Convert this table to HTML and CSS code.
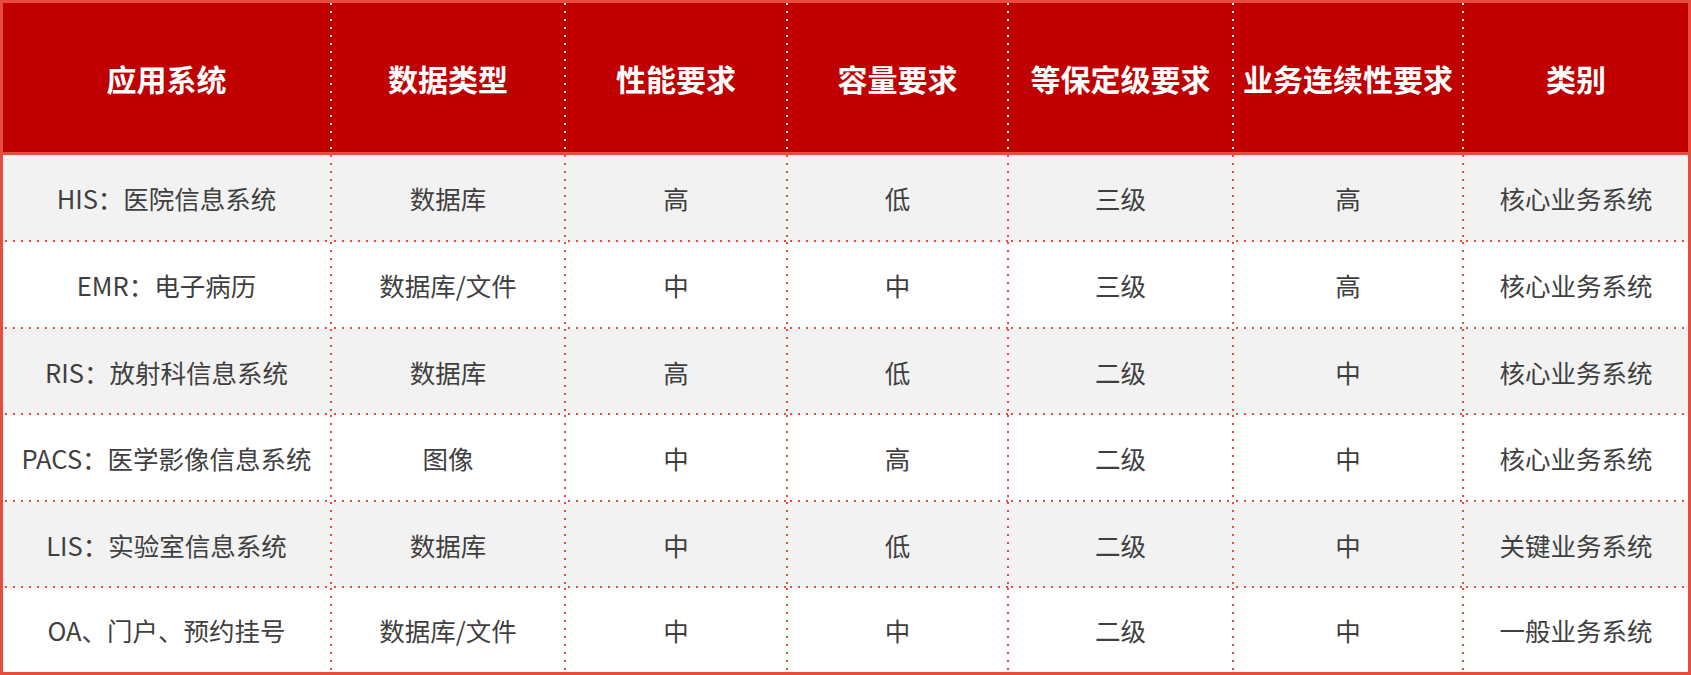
FILE: index.html
```html
<!DOCTYPE html>
<html lang="zh-CN">
<head>
<meta charset="utf-8">
<title>应用系统分类</title>
<link rel="stylesheet" href="styles.css">
</head>
<body>
<div class="table">
  <div class="row head">
    <div class="cell">应用系统</div>
    <div class="cell">数据类型</div>
    <div class="cell">性能要求</div>
    <div class="cell">容量要求</div>
    <div class="cell">等保定级要求</div>
    <div class="cell">业务连续性要求</div>
    <div class="cell">类别</div>
  </div>
  <div class="row body alt r87">
    <div class="cell">HIS：医院信息系统</div>
    <div class="cell">数据库</div>
    <div class="cell">高</div>
    <div class="cell">低</div>
    <div class="cell">三级</div>
    <div class="cell">高</div>
    <div class="cell">核心业务系统</div>
  </div>
  <div class="row body r87">
    <div class="cell">EMR：电子病历</div>
    <div class="cell">数据库/文件</div>
    <div class="cell">中</div>
    <div class="cell">中</div>
    <div class="cell">三级</div>
    <div class="cell">高</div>
    <div class="cell">核心业务系统</div>
  </div>
  <div class="row body alt r86">
    <div class="cell">RIS：放射科信息系统</div>
    <div class="cell">数据库</div>
    <div class="cell">高</div>
    <div class="cell">低</div>
    <div class="cell">二级</div>
    <div class="cell">中</div>
    <div class="cell">核心业务系统</div>
  </div>
  <div class="row body r87">
    <div class="cell">PACS：医学影像信息系统</div>
    <div class="cell">图像</div>
    <div class="cell">中</div>
    <div class="cell">高</div>
    <div class="cell">二级</div>
    <div class="cell">中</div>
    <div class="cell">核心业务系统</div>
  </div>
  <div class="row body alt r86">
    <div class="cell">LIS：实验室信息系统</div>
    <div class="cell">数据库</div>
    <div class="cell">中</div>
    <div class="cell">低</div>
    <div class="cell">二级</div>
    <div class="cell">中</div>
    <div class="cell">关键业务系统</div>
  </div>
  <div class="row body last r84">
    <div class="cell">OA、门户、预约挂号</div>
    <div class="cell">数据库/文件</div>
    <div class="cell">中</div>
    <div class="cell">中</div>
    <div class="cell">二级</div>
    <div class="cell">中</div>
    <div class="cell">一般业务系统</div>
  </div>
</div>
</body>
</html>
```

FILE: styles.css
```css
html, body {
  margin: 0;
  padding: 0;
  background: #ffffff;
  overflow: hidden;
}

.table {
  box-sizing: border-box;
  width: 1691px;
  height: 675px;
  border: 3px solid #e84c3d;
  display: flex;
  flex-direction: column;
  overflow: hidden;
  font-family: "Noto Sans CJK SC", "Noto Sans", sans-serif;
}

.row {
  box-sizing: border-box;
  display: grid;
  grid-template-columns: 329px 234px 222px 221px 225px 230px 224px;
  grid-template-rows: 100%;
  flex: none;
  overflow: hidden;
}

.cell {
  box-sizing: border-box;
  display: flex;
  align-items: center;
  justify-content: center;
  white-space: nowrap;
  padding-right: 2px;
  min-height: 0;
  line-height: 1.2;
}

.cell:last-child {
  padding-right: 0;
}

/* header */
.head {
  height: 152px;
  background: #c00000;
  border-bottom: 3px solid #e84c3d;
}

.head .cell {
  color: #ffffff;
  font-size: 30px;
  font-weight: 700;
  background-image: linear-gradient(to bottom, #ffffff 2px, transparent 2px);
  background-size: 2px 8px;
  background-repeat: repeat-y;
  background-position: right 0 top 0;
}

.head .cell:last-child {
  background-image: none;
}

/* body rows */
.body {
  background: #ffffff;
}

.body.alt {
  background: #f2f2f2;
}

.r87 { height: 87px; }
.r86 { height: 86px; }
.r84 { height: 84px; }

.body .cell {
  color: #3f3f3f;
  font-size: 25.5px;
  font-weight: 400;
  padding-bottom: 2px;
  padding-top: 2px;
  background-image:
    linear-gradient(to bottom, #e84c3d 2px, transparent 2px),
    linear-gradient(to right, #e84c3d 2px, transparent 2px);
  background-size: 2px 8px, 8px 2px;
  background-repeat: repeat-y, repeat-x;
  background-position: right 0 top 0, left 2px bottom 0;
}

.body .cell:last-child {
  background-image: linear-gradient(to right, #e84c3d 2px, transparent 2px);
  background-size: 8px 2px;
  background-repeat: repeat-x;
  background-position: left 2px bottom 0;
}

.body.last .cell {
  background-image: linear-gradient(to bottom, #e84c3d 2px, transparent 2px);
  background-size: 2px 8px;
  background-repeat: repeat-y;
  background-position: right 0 top 0;
}

.body.last .cell:last-child {
  background-image: none;
}
```
